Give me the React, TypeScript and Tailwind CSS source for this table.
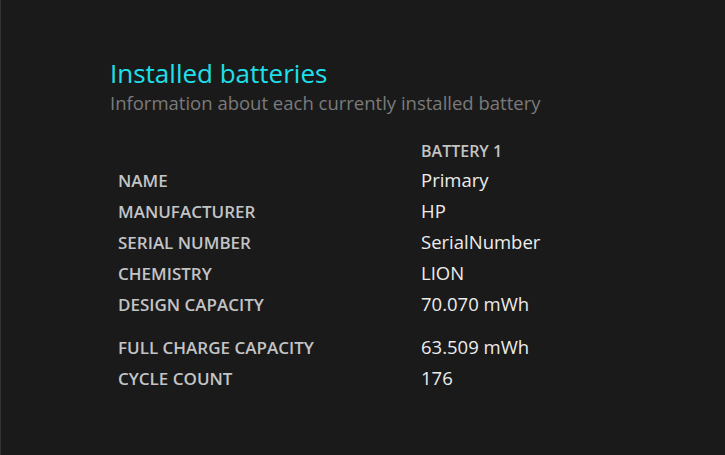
const rows: [string, string, string][] = [
  ['NAME', 'Primary', ''],
  ['MANUFACTURER', 'HP', ''],
  ['SERIAL NUMBER', 'SerialNumber', ''],
  ['CHEMISTRY', 'LION', ''],
  ['DESIGN CAPACITY', '70.070 mWh', 'mb-3'],
  ['FULL CHARGE CAPACITY', '63.509 mWh', ''],
  ['CYCLE COUNT', '176', ''],
]

export default function App() {
  return (
    <div
      className="w-[725px] h-[455px] bg-[#1a1a1a] border-l border-[#333333] overflow-hidden"
      style={{ fontFamily: '"Open Sans", "Noto Sans", sans-serif' }}
    >
      <div className="pl-[109px] pt-[56px]">
        <h1 className="text-[26px] leading-[34px] text-[#1fe0ea]">Installed batteries</h1>
        <p className="text-[18.5px] leading-[26px] text-[#7a7a7a]">
          Information about each currently installed battery
        </p>

        <div className="mt-[21px] pl-[8px]">
          <div className="grid grid-cols-[303px_1fr] h-[28px] items-center">
            <span />
            <span className="text-[16px] font-semibold text-[#c4c4c4]">BATTERY 1</span>
          </div>
          {rows.map(([label, value, extra]) => (
            <div key={label} className={`grid grid-cols-[303px_1fr] h-[31px] items-baseline ${extra}`}>
              <span className="leading-[30px] text-[17px] font-semibold text-[#c2c4c6]">{label}</span>
              <span className="leading-[30px] text-[18.5px] text-[#ececec]">{value}</span>
            </div>
          ))}
        </div>
      </div>
    </div>
  )
}
